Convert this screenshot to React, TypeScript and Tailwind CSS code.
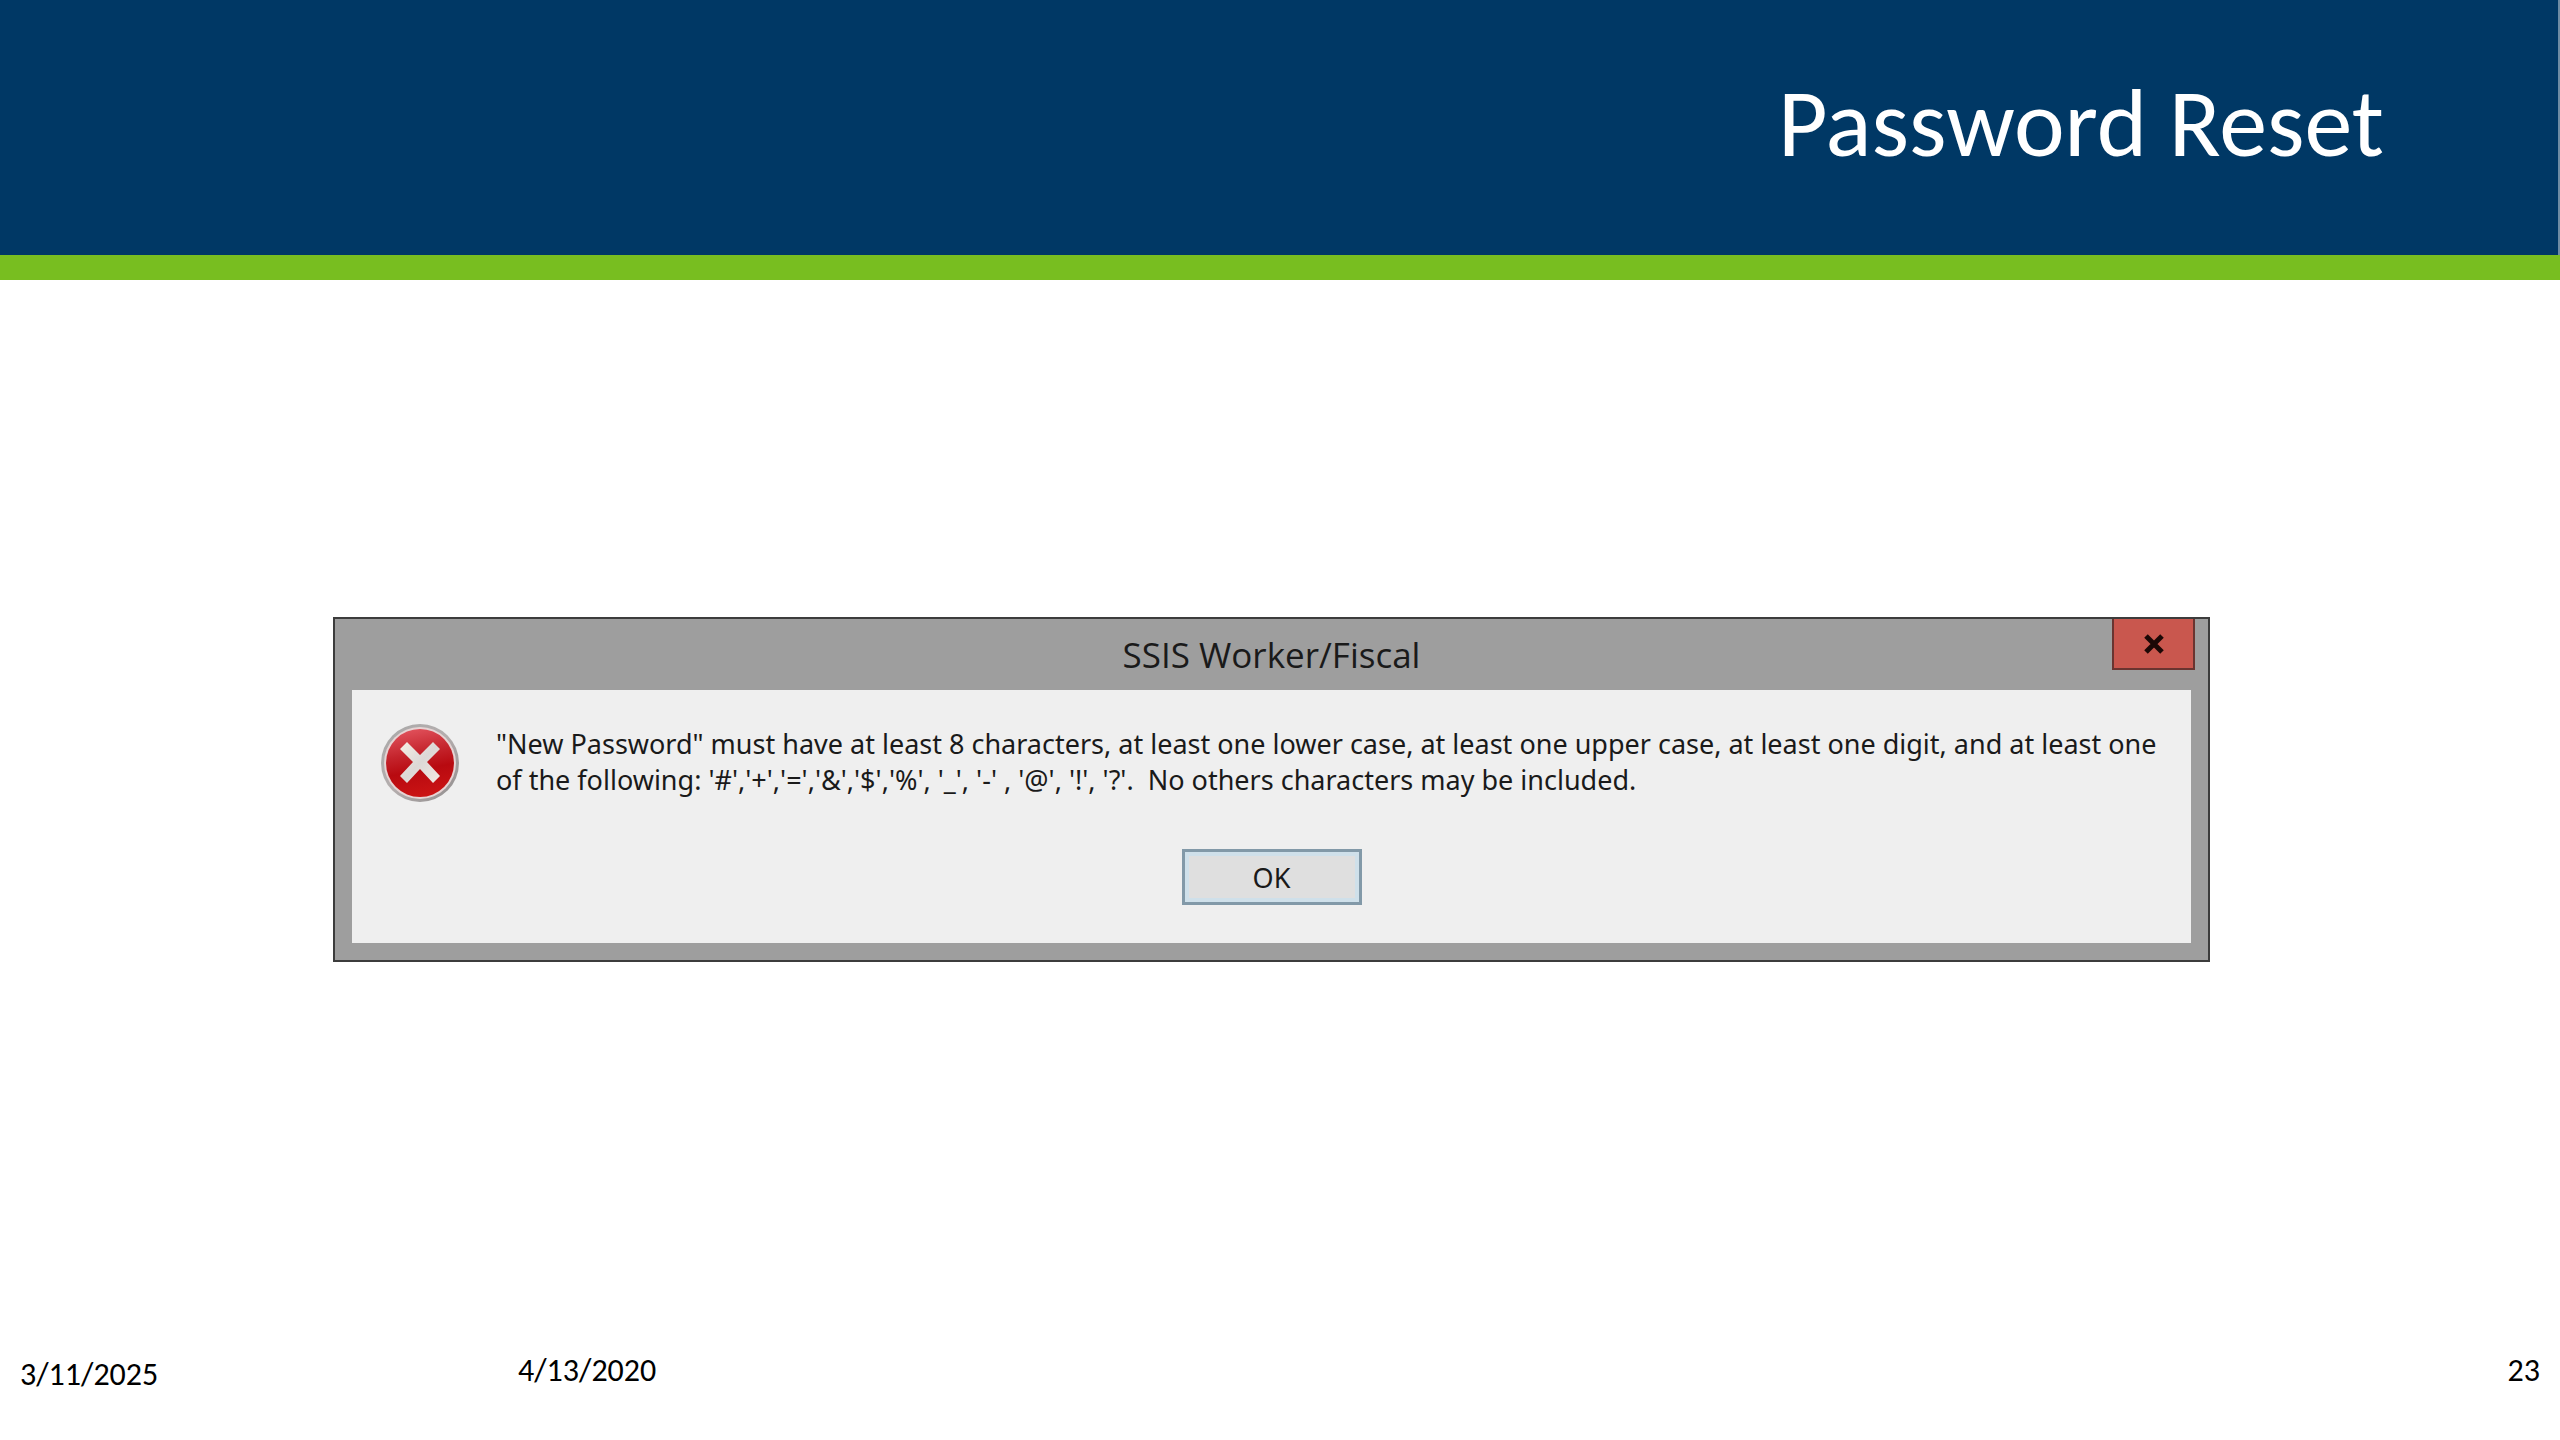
const FOOTER = {
  printed: "3/11/2025",
  date: "4/13/2020",
  page: "23",
};

function ErrorIcon() {
  return (
    <svg viewBox="0 0 80 80" className="h-20 w-20 shrink-0" role="img" aria-label="Error">
      <defs>
        <linearGradient id="rim" x1="0" y1="0" x2="1" y2="1">
          <stop offset="0" stopColor="#a9a9a9" />
          <stop offset="0.5" stopColor="#b4aeae" />
          <stop offset="1" stopColor="#8f8b8b" />
        </linearGradient>
        <linearGradient id="disc" x1="0.4" y1="0" x2="0.6" y2="1">
          <stop offset="0" stopColor="#e0505a" />
          <stop offset="0.35" stopColor="#c4242c" />
          <stop offset="0.6" stopColor="#b80a10" />
          <stop offset="1" stopColor="#cc1414" />
        </linearGradient>
        <linearGradient id="cross" x1="0" y1="0" x2="1" y2="1">
          <stop offset="0" stopColor="#f6efe4" />
          <stop offset="0.5" stopColor="#dcd8d6" />
          <stop offset="1" stopColor="#f4e9e2" />
        </linearGradient>
      </defs>
      <circle cx="40" cy="39" r="39" fill="url(#rim)" />
      <circle cx="40" cy="39" r="36" fill="#e6d4d4" />
      <circle cx="40" cy="39" r="34" fill="url(#disc)" />
      <path
        d="M27 18 L40 31 L53 18 L60 25 L47 38 L60 52 L53 59 L40 45 L27 59 L20 52 L33 38 L20 25 Z"
        fill="url(#cross)"
      />
    </svg>
  );
}

function CloseIcon() {
  return (
    <svg viewBox="0 0 22 20" className="h-5 w-[22px]" aria-hidden="true">
      <path d="M3 2 L19 18 M19 2 L3 18" stroke="#1c0806" strokeWidth="5" />
    </svg>
  );
}

function MessageBox() {
  return (
    <section
      role="alertdialog"
      aria-labelledby="box-title"
      aria-describedby="box-text"
      className="w-full border-2 border-[#3c3c3c] bg-[#9e9e9e] px-[17px] pb-[17px] font-['Noto_Sans','Open_Sans',sans-serif] text-[#1a1a1a]"
    >
      <header className="relative flex h-[71px] items-center justify-center">
        <h2 id="box-title" className="font-['Open_Sans',sans-serif] text-[35px] leading-none">SSIS Worker/Fiscal</h2>
        <button
          type="button"
          aria-label="Close"
          className="absolute -right-1 top-0 flex h-[51px] w-[83px] items-center justify-center border-2 border-t-0 border-[#6a3430] bg-[#c9574e]"
        >
          <CloseIcon />
        </button>
      </header>

      <div className="bg-[#efefef] px-7 pb-[38px] pt-[34px]">
        <div className="flex gap-9">
          <ErrorIcon />
          <p id="box-text" className="pt-0.5 text-[27px] leading-9">
            "New Password" must have at least 8 characters, at least one lower case, at least one upper case, at least one digit, and at least one
            <br />
            of the following: '#','+','=','&amp;','$','%', '_', '-' , '@', '!', '?'.&nbsp; No others characters may be included.
          </p>
        </div>
        <div className="mt-[45px] flex justify-center">
          <button
            type="button"
            className="h-14 w-[180px] border-[3px] border-[#8299a8] bg-[#dfdfdf] text-[27px] leading-none ring-4 ring-inset ring-[#cfe0ea]"
          >
            OK
          </button>
        </div>
      </div>
    </section>
  );
}

export default function App() {
  return (
    <div className="flex min-h-screen flex-col bg-white font-[Carlito,Lato,sans-serif] text-black">
      <header>
        <div className="flex h-[255px] justify-end border-r-2 border-[#6d8ba3] bg-[#003865] pr-[174px] pt-[68px]">
          <h1 className="text-[96px] leading-[112px] text-white">Password Reset</h1>
        </div>
        <div className="h-[25px] bg-[#78be20]" />
      </header>

      <main className="flex flex-1 items-center pl-[333px] pr-[350px]">
        <MessageBox />
      </main>

      <footer className="flex h-[141px] items-start px-5 pt-14 text-[32px] leading-8">
        <span className="w-[498px] pt-1">{FOOTER.printed}</span>
        <span>{FOOTER.date}</span>
        <span className="ml-auto">{FOOTER.page}</span>
      </footer>
    </div>
  );
}
